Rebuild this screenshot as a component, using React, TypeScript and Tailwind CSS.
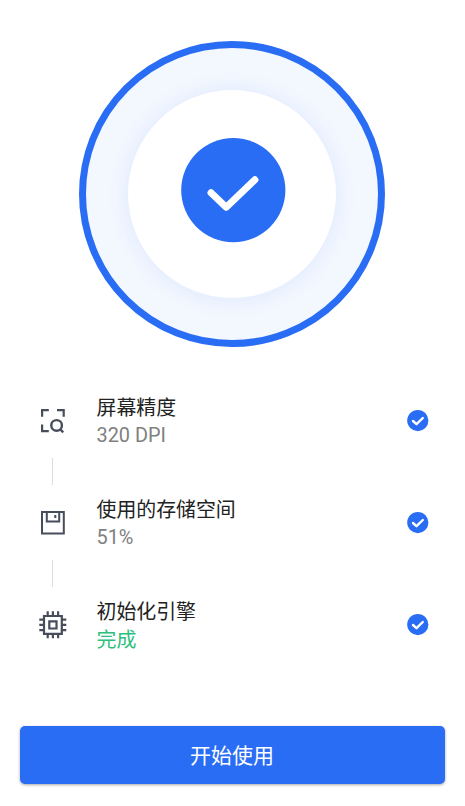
import React from 'react';

function ScanIcon() {
  return (
    <svg width="28" height="28" viewBox="0 0 28 28" fill="none" stroke="#484d5c" strokeWidth="2.2">
      <path d="M3.1 9.8V3.1H9.8M18 3.1H24.7V9.8M3.1 17.6V24.2H9.8" />
      <circle cx="17.6" cy="18.4" r="5.3" strokeWidth="2.4" />
      <path d="M21 22L24.2 25.4" strokeWidth="2.4" />
    </svg>
  );
}

function DiskIcon() {
  return (
    <svg width="28" height="28" viewBox="0 0 28 28" fill="none" stroke="#484d5c" strokeWidth="2">
      <path d="M3 3H24.8V24.6H3ZM7.8 3V12.6H20.2V3" />
      <path d="M16.3 6V9" />
    </svg>
  );
}

function ChipIcon() {
  return (
    <svg width="28" height="28" viewBox="0 0 28 28" fill="none" stroke="#484d5c" strokeWidth="2.2">
      <path d="M5 5H22.8V22.8H5Z" />
      <path d="M10.3 10.3H17.5V17.5H10.3Z" />
      <path d="M8.7 5V.3M13.9 5V.3M19.1 5V.3M8.7 27.3V23M13.9 27.3V23M19.1 27.3V23M5 8.7H.3M5 13.9H.3M5 19.1H.3M27.3 8.7H23M27.3 13.9H23M27.3 19.1H23" />
    </svg>
  );
}

function CheckBadge() {
  return (
    <svg width="22" height="22" viewBox="0 0 22 22" fill="none">
      <circle cx="10.8" cy="10.6" r="10.6" fill="#2a6df5" />
      <path d="M6 11L9.5 14.2L15.8 8" stroke="white" strokeWidth="2.4" strokeLinecap="round" strokeLinejoin="round" />
    </svg>
  );
}

const steps = [
  { icon: <ScanIcon />, title: '屏幕精度', value: '320 DPI', color: 'text-[#808080]' },
  { icon: <DiskIcon />, title: '使用的存储空间', value: '51%', color: 'text-[#808080]' },
  { icon: <ChipIcon />, title: '初始化引擎', value: '完成', color: 'pt-px text-[#2dc07c]' },
];

export default function App() {
  return (
    <main className="flex h-[806px] w-[465px] flex-col overflow-hidden bg-white font-[Roboto,'Noto_Sans_CJK_SC',sans-serif]">
      <div className="mt-[41px] ml-[79px] flex size-[306px] items-center justify-center rounded-full border-[7px] border-[#2a6df5] bg-[#f3f8ff]">
        <div className="flex size-[208px] items-center justify-center rounded-full bg-white pb-[8px] pl-[3px] shadow-[0_1px_22px_rgba(42,80,225,0.1)]">
          <svg width="105" height="105" viewBox="0 0 105 105" fill="none">
            <circle cx="52.3" cy="52.1" r="52.1" fill="#2a6df5" />
            <path d="M30 54.8L45.2 69.2L73.9 41.8" stroke="white" strokeWidth="7" strokeLinecap="round" strokeLinejoin="round" />
          </svg>
        </div>
      </div>

      <ul className="mt-9 flex flex-col">
        {steps.map((step, i) => (
          <li key={step.title}>
            {i > 0 && <div className="ml-[52px] h-[27px] w-px bg-[#dcdcdc]" />}
            <div className="flex h-[75px] items-start pr-9 pl-[39px]">
              <div className="pt-[23.5px]">{step.icon}</div>
              <div className="ml-[29.5px] flex-1 pt-[11.5px] text-[19.9px] leading-[27px]">
                <p className="text-[#222222]">{step.title}</p>
                <p className={step.color}>{step.value}</p>
              </div>
              <div className="pt-[26.5px]">
                <CheckBadge />
              </div>
            </div>
          </li>
        ))}
      </ul>

      <button className="mt-16 ml-[19.5px] h-[58px] w-[425px] rounded-[5px] bg-[#2a6df5] pt-[3px] text-[21px] text-white shadow-[0_1px_3px_rgba(0,0,0,0.35)]">
        开始使用
      </button>
    </main>
  );
}
